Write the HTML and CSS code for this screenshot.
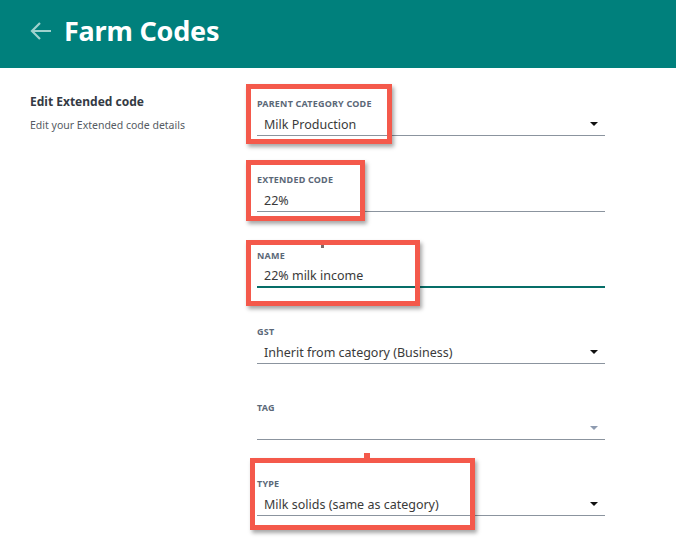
FILE: index.html
```html
<!DOCTYPE html>
<html lang="en">
<head>
  <meta charset="UTF-8">
  <meta name="viewport" content="width=device-width, initial-scale=1.0">
  <title>Farm Codes</title>
  <link rel="stylesheet" href="styles.css">
</head>
<body>
  <div class="header">
    <a class="back" href="#">
      <svg width="22" height="18" viewBox="0 0 22 18">
        <path d="M21 9H2M10 1L2 9l8 8" fill="none" stroke="currentColor" stroke-width="2.2"/>
      </svg>
    </a>
    <h1>Farm Codes</h1>
  </div>

  <div class="main">
    <div class="aside">
      <h2>Edit Extended code</h2>
      <p>Edit your Extended code details</p>
    </div>

    <div class="form">
      <div class="field">
        <label>Parent Category Code</label>
        <div class="control">
          <span class="value">Milk Production</span>
          <span class="caret"></span>
        </div>
      </div>

      <div class="field">
        <label>Extended Code</label>
        <div class="control">
          <span class="value">22%</span>
        </div>
      </div>

      <div class="field">
        <label>Name</label>
        <div class="control focused">
          <span class="value">22% milk income</span>
        </div>
      </div>

      <div class="field">
        <label>GST</label>
        <div class="control">
          <span class="value">Inherit from category (Business)</span>
          <span class="caret"></span>
        </div>
      </div>

      <div class="field">
        <label>Tag</label>
        <div class="control">
          <span class="value"></span>
          <span class="caret muted"></span>
        </div>
      </div>

      <div class="field">
        <label>Type</label>
        <div class="control">
          <span class="value">Milk solids (same as category)</span>
          <span class="caret"></span>
        </div>
      </div>
    </div>
  </div>

  <!-- highlight boxes drawn over the form -->
  <div class="mark mark-parent"></div>
  <div class="mark mark-code"></div>
  <div class="mark mark-name"><span class="nub nub-name"></span></div>
  <div class="mark mark-type"><span class="nub nub-type"></span></div>
</body>
</html>
```

FILE: styles.css
```css
body {
  margin: 0;
  padding: 0;
  font-family: "Noto Sans", "Open Sans", sans-serif;
  background-color: #fff;
  color: #333;
}

.header {
  display: flex;
  align-items: center;
  height: 68px;
  padding-left: 30px;
  background-color: #00807c;
  box-sizing: border-box;
}

.back {
  display: flex;
  color: #9fd1cd;
  margin-right: 12px;
  margin-top: -7px;
}

.header h1 {
  margin: 0;
  margin-top: -8px;
  color: #fff;
  font-size: 27px;
  font-weight: 700;
  letter-spacing: -0.2px;
}

.main {
  display: flex;
  padding-top: 26px;
}

.aside {
  width: 227px;
  padding-left: 30px;
}

.aside h2 {
  margin: 0;
  font-size: 12px;
  line-height: 16px;
  font-weight: 700;
  color: #343a44;
}

.aside p {
  margin: 7px 0 0;
  font-size: 10.5px;
  line-height: 16px;
  color: #555b63;
}

.form {
  width: 348px;
  padding-top: 3px;
}

.field {
  margin-bottom: 37px;
}

.field label {
  display: block;
  height: 13px;
  font-size: 9px;
  line-height: 13px;
  font-weight: 700;
  text-transform: uppercase;
  letter-spacing: 0.2px;
  color: #5b6878;
}

.control {
  display: flex;
  align-items: center;
  justify-content: space-between;
  height: 26px;
  padding: 3px 7px 0;
  border-bottom: 1px solid #8b949e;
  box-sizing: border-box;
}

.control.focused {
  border-bottom: 2px solid #066e68;
}

.value {
  font-size: 12.5px;
  color: #3a3a3a;
}

.caret {
  width: 0;
  height: 0;
  border-left: 4px solid transparent;
  border-right: 4px solid transparent;
  border-top: 4px solid #111;
}

.caret.muted {
  border-top-color: #8e9bb0;
}

.mark {
  position: absolute;
  border: 5px solid #f4594b;
  box-sizing: border-box;
  box-shadow: 2px 3px 4px rgba(0, 0, 0, 0.35);
}

.mark-parent {
  left: 246px;
  top: 84px;
  width: 146px;
  height: 60px;
}

.mark-code {
  left: 246px;
  top: 160px;
  width: 119px;
  height: 61px;
}

.mark-name {
  left: 246px;
  top: 240px;
  width: 174px;
  height: 66px;
}

.mark-type {
  left: 250px;
  top: 458px;
  width: 225px;
  height: 72px;
}

.nub {
  position: absolute;
}

.nub-name {
  left: 70px;
  top: 0;
  width: 3px;
  height: 3px;
  background-color: #7d6a68;
}

.nub-type {
  left: 109px;
  top: -10px;
  width: 6px;
  height: 6px;
  background-color: #f4594b;
}
```
